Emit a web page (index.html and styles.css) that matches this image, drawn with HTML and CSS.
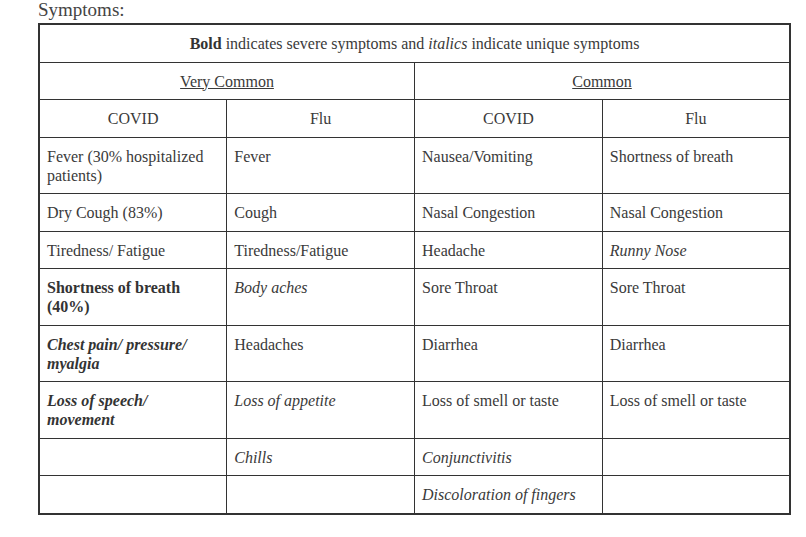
FILE: index.html
```html
<!DOCTYPE html>
<html>
<head>
<meta charset="utf-8">
<link rel="stylesheet" href="styles.css">
</head>
<body>
<div class="page">
  <p class="title">Symptoms:</p>
  <table class="sym">
    <colgroup><col class="c"><col class="c"><col class="c"><col class="c"></colgroup>
    <tr><td colspan="4" class="center"><b>Bold</b> indicates severe symptoms and <i>italics</i> indicate unique symptoms</td></tr>
    <tr><td colspan="2" class="center"><u>Very Common</u></td><td colspan="2" class="center"><u>Common</u></td></tr>
    <tr><td class="center">COVID</td><td class="center">Flu</td><td class="center">COVID</td><td class="center">Flu</td></tr>
    <tr><td>Fever (30% hospitalized patients)</td><td>Fever</td><td>Nausea/Vomiting</td><td>Shortness of breath</td></tr>
    <tr><td>Dry Cough (83%)</td><td>Cough</td><td>Nasal Congestion</td><td>Nasal Congestion</td></tr>
    <tr><td>Tiredness/ Fatigue</td><td>Tiredness/Fatigue</td><td>Headache</td><td><i>Runny Nose</i></td></tr>
    <tr><td><b>Shortness of breath (40%)</b></td><td><i>Body aches</i></td><td>Sore Throat</td><td>Sore Throat</td></tr>
    <tr><td><b><i>Chest pain/ pressure/ myalgia</i></b></td><td>Headaches</td><td>Diarrhea</td><td>Diarrhea</td></tr>
    <tr><td><b><i>Loss of speech/<br>movement</i></b></td><td><i>Loss of appetite</i></td><td>Loss of smell or taste</td><td>Loss of smell or taste</td></tr>
    <tr><td></td><td><i>Chills</i></td><td><i>Conjunctivitis</i></td><td></td></tr>
    <tr><td></td><td></td><td><i>Discoloration of fingers</i></td><td></td></tr>
  </table>
</div>
</body>
</html>
```
FILE: styles.css
```css
html, body {
  margin: 0;
  padding: 0;
  background: #ffffff;
}
body {
  font-family: "Liberation Serif", "Times New Roman", serif;
  color: #3a3a3a;
}
.page {
  padding: 0 15px 0 38px;
}
.title {
  margin: 0;
  font-size: 19px;
  line-height: 20px;
  height: 23px;
  color: #444;
}
.sym {
  border-collapse: collapse;
  table-layout: fixed;
  width: 753px;
  border: 2px solid #333;
  font-size: 16px;
  line-height: 19px;
}
.sym .c {
  width: 25%;
}
.sym td {
  border: 1px solid #333;
  padding: 9px 7px 8.5px;
  vertical-align: top;
  text-align: left;
}
.sym td.center {
  text-align: center;
}
.sym b {
  font-weight: bold;
  color: #333;
}
```
